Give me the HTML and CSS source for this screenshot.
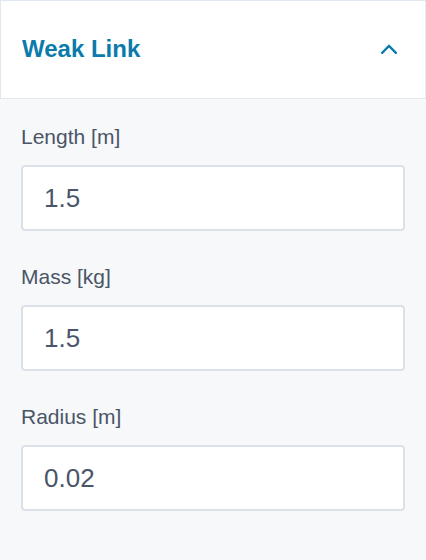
FILE: index.html
```html
<!DOCTYPE html>
<html lang="en">
<head>
<meta charset="utf-8">
<title>Weak Link</title>
<link rel="stylesheet" href="styles.css">
</head>
<body>
<div class="panel">
  <div class="panel-header">
    <h2 class="panel-title">Weak Link</h2>
    <svg class="chevron" width="16" height="10" viewBox="0 0 16 10" aria-hidden="true">
      <path d="M1.2 8.8 L8 2 L14.8 8.8" fill="none" stroke="#0b7bab" stroke-width="2.4" stroke-linecap="square"/>
    </svg>
  </div>
  <div class="panel-body">
    <div class="field">
      <label class="field-label">Length [m]</label>
      <input class="field-input" type="text" value="1.5">
    </div>
    <div class="field">
      <label class="field-label">Mass [kg]</label>
      <input class="field-input" type="text" value="1.5">
    </div>
    <div class="field">
      <label class="field-label">Radius [m]</label>
      <input class="field-input" type="text" value="0.02">
    </div>
  </div>
</div>
</body>
</html>
```
FILE: styles.css
```css
* { box-sizing: border-box; }
html, body {
  margin: 0;
  padding: 0;
  background: #f7f8fa;
  font-family: "Liberation Sans", Arial, sans-serif;
}
.panel {
  width: 426px;
  min-height: 560px;
  background: #f7f8fa;
}
.panel-header {
  height: 99px;
  background: #ffffff;
  border: 1px solid #e2e8f0;
  display: flex;
  align-items: center;
  justify-content: space-between;
  padding: 0 28px 0 21px;
}
.panel-title {
  margin: 0;
  font-size: 24px;
  line-height: 28px;
  font-weight: bold;
  color: #0b7bab;
  padding-bottom: 1px;
}
.chevron {
  display: block;
  margin-bottom: 2px;
}
.panel-body {
  padding: 26px 21px 0 21px;
  display: flex;
  flex-direction: column;
  gap: 34px;
}
.field {
  display: flex;
  flex-direction: column;
}
.field-label {
  font-size: 21px;
  line-height: 24px;
  color: #4a5568;
  margin-bottom: 16px;
}
.field-input {
  width: 384px;
  height: 66px;
  border: 2px solid #dbe1e8;
  border-radius: 4px;
  background: #ffffff;
  padding: 0 21px;
  font-family: "Liberation Sans", Arial, sans-serif;
  font-size: 26px;
  color: #4a5568;
  outline: none;
}
```
